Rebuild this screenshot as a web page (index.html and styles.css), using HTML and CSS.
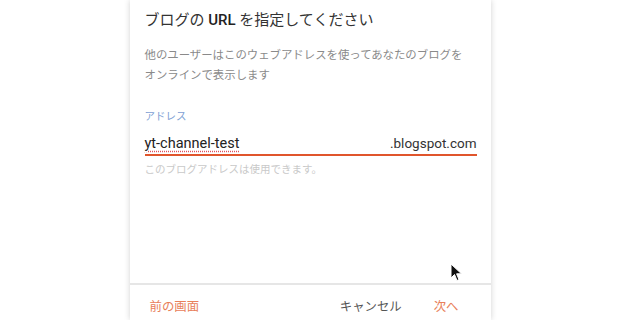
FILE: index.html
```html
<!DOCTYPE html>
<html lang="ja">
<head>
  <meta charset="UTF-8">
  <title>ブログの URL を指定してください</title>
  <link rel="stylesheet" href="styles.css">
</head>
<body>

  <div class="dialog">
    <div class="dialog-body">
      <h2 class="title">ブログの <b>URL</b> を指定してください</h2>
      <p class="desc">他のユーザーはこのウェブアドレスを使ってあなたのブログをオンラインで表示します</p>

      <div class="field">
        <label class="field-label">アドレス</label>
        <div class="field-row">
          <span class="field-value">yt-channel-test</span>
          <span class="field-suffix">.blogspot.com</span>
        </div>
        <div class="field-hint">このブログアドレスは使用できます。</div>
      </div>
    </div>

    <div class="dialog-footer">
      <button class="btn accent">前の画面</button>
      <div class="spacer"></div>
      <button class="btn">キャンセル</button>
      <button class="btn accent">次へ</button>
    </div>
  </div>

  <!-- mouse pointer -->
  <svg class="pointer" width="13" height="19" viewBox="0 0 13 19">
    <path d="M1 1 L1 15 L4.5 11.5 L7 17.5 L9 16.6 L6.6 10.8 L11.5 10.8 Z" fill="#111" stroke="#fff" stroke-width="1"/>
  </svg>

</body>
</html>
```

FILE: styles.css
```css
body {
  margin: 0;
  background: #fff;
  font-family: Roboto, "Noto Sans CJK JP", sans-serif;
  color: #222;
  overflow: hidden;
  height: 320px;
  position: relative;
}
.dialog {
  width: 361px;
  height: 320px;
  margin: 0 auto;
  background: #fff;
  box-shadow: 0 0 6px rgba(0, 0, 0, 0.18);
}
.dialog-body {
  height: 283px;
  box-sizing: border-box;
  padding: 8px 14px 0 15px;
}
.title {
  margin: 0;
  font-size: 15px;
  line-height: 24px;
  font-weight: normal;
  color: #333;
}
.title b {
  font-weight: 500;
  color: #222;
}
.desc {
  max-width: 324px;
  margin: 13px 0 0;
  font-size: 11.4px;
  line-height: 20px;
  color: #8a8a8a;
}
.field {
  margin-top: 24px;
}
.field-label {
  display: block;
  font-size: 10.5px;
  line-height: 16px;
  color: #7e9fd4;
}
.field-row {
  margin-top: 8px;
  display: flex;
  align-items: baseline;
  justify-content: space-between;
  line-height: 20px;
  border-bottom: 2px solid #e0552c;
}
.field-value {
  font-size: 14.5px;
  color: #222;
  text-decoration: underline dotted #e0505a;
  text-underline-offset: 3px;
}
.field-suffix {
  font-size: 13.5px;
  color: #333;
}
.field-hint {
  margin-top: 7px;
  font-size: 10.5px;
  line-height: 14px;
  color: #c9c9c9;
}
.dialog-footer {
  display: flex;
  align-items: center;
  border-top: 2px solid #e6e6e6;
  padding: 12px 16px 0 4px;
}
.spacer {
  flex: 1;
}
.btn {
  background: none;
  border: none;
  padding: 0 16px;
  font-family: inherit;
  font-size: 12.4px;
  line-height: 20px;
  color: #555;
  cursor: pointer;
}
.btn.accent {
  color: #e8805a;
}
.pointer {
  position: absolute;
  left: 450px;
  top: 263px;
}
```
